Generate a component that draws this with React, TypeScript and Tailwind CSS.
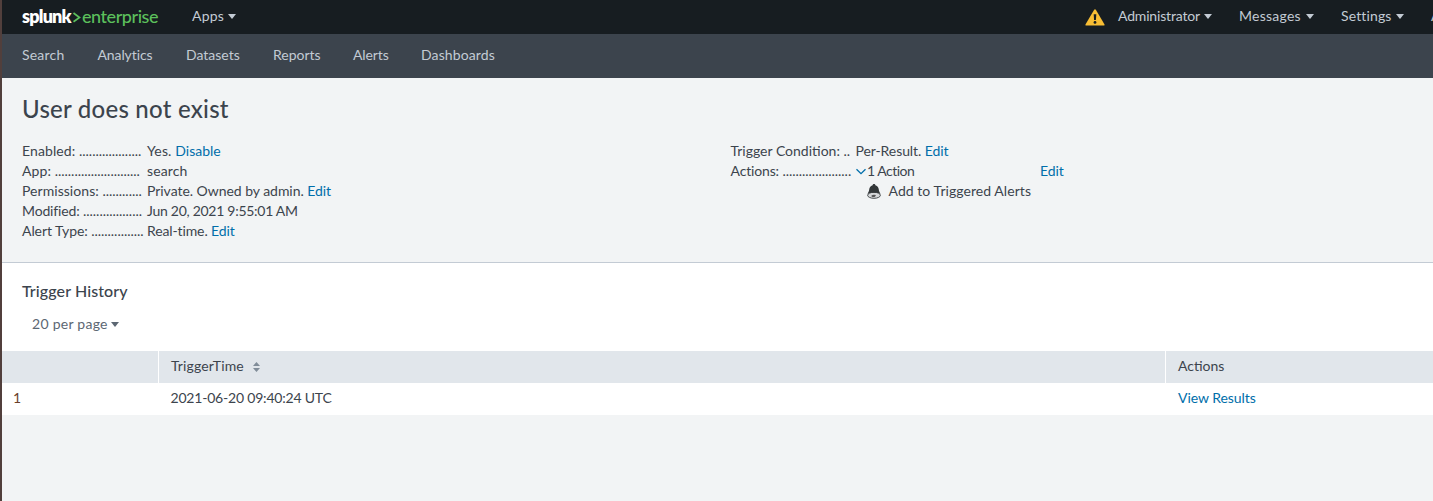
import type { ReactNode } from "react";

const DOTS = "..............................";

function Caret({ className = "" }: { className?: string }) {
  return (
    <svg className={`h-[5px] w-2 shrink-0 ${className}`} viewBox="0 0 8 5" fill="currentColor">
      <path d="M0 0h8L4 5z" />
    </svg>
  );
}

function Row({ label, labelClass, dots, children }: {
  label: string;
  labelClass: string;
  dots: number;
  children: ReactNode;
}) {
  return (
    <div className="flex h-5">
      <dt className="flex w-[125px] shrink-0">
        <span className={labelClass}>{label}</span>
        <span className="tracking-[-0.03px]">{DOTS.slice(0, dots)}</span>
      </dt>
      <dd className="flex">{children}</dd>
    </div>
  );
}

function Edit() {
  return <a className="tracking-[-0.1px] text-[#006eaa]">Edit</a>;
}

export default function App() {
  return (
    <div className="flex h-[501px] w-full flex-col overflow-hidden border-l-2 border-[#513f3c] bg-[#f2f4f5] font-[Lato,sans-serif] text-sm leading-5 whitespace-pre text-[#3c444d]">
      <header className="flex h-[34px] shrink-0 items-center bg-[#171d21] pb-0.5 text-[#c3cbd4]">
        <div className="flex w-[170px] shrink-0 items-center pl-5 text-lg leading-5">
          <span className="w-[50px] font-extrabold tracking-[-0.8px] text-white">splunk</span>
          <svg className="mt-0.5 h-[11px] w-[9px]" viewBox="0 0 9 11" fill="none" stroke="#5cc05c" strokeWidth="1.7">
            <path d="M1.5 1 7.5 5.5 1.5 9.8" />
          </svg>
          <span className="ml-px font-medium tracking-[-0.45px] text-[#5cc05c]">enterprise</span>
        </div>
        <div className="flex items-center pl-5">
          <span className="w-9 tracking-[0.2px]">Apps</span>
          <Caret />
        </div>
        <nav className="ml-auto flex w-[348px] shrink-0 items-center">
          <svg className="mt-0.5 mr-[13px] h-[17px] w-5 shrink-0" viewBox="0 0 20 17">
            <path d="M9 .9Q10-.6 11 .9l8.4 14.4q.5 1.2-.7 1.2H1.3q-1.2 0-.7-1.2z" fill="#f8be34" />
            <path d="M8.7 5.3h2.6l-.4 5.7H9.1z" fill="#171d21" />
            <circle cx="10" cy="13.4" r="1.4" fill="#171d21" />
          </svg>
          <span className="w-[86px] shrink-0 tracking-[-0.17px]">Administrator</span>
          <Caret />
          <span className="ml-[27px] w-[67px] shrink-0 tracking-[0.25px]">Messages</span>
          <Caret />
          <span className="ml-[27px] w-[55px] shrink-0 tracking-[0.13px]">Settings</span>
          <Caret />
          <span className="ml-[27px] shrink-0">Activity</span>
        </nav>
      </header>

      <nav className="flex h-11 shrink-0 items-center bg-[#3c444d] pb-0.5 pl-5 text-[#c3cbd4]">
        <span className="w-[75.5px] tracking-[0.2px]">Search</span>
        <span className="w-[88.5px] tracking-[-0.1px]">Analytics</span>
        <span className="w-[87px]">Datasets</span>
        <span className="w-20">Reports</span>
        <span className="w-[68px] tracking-[-0.1px]">Alerts</span>
        <span className="tracking-[0.12px]">Dashboards</span>
      </nav>

      <section className="h-[185px] shrink-0 border-b border-[#c3cbd4] px-5 pt-[15px]">
        <h1 className="text-2xl leading-8 font-medium tracking-[0.24px]">User does not exist</h1>
        <div className="mt-4 flex">
          <dl className="w-[708.5px]">
            <Row label="Enabled: " labelClass="tracking-[0.1px]" dots={19}>
              <span className="tracking-[0.15px]">Yes. </span>
              <a className="text-[#006eaa]">Disable</a>
            </Row>
            <Row label="App: " labelClass="tracking-[0.1px]" dots={26}>
              <span className="tracking-[0.13px]">search</span>
            </Row>
            <Row label="Permissions: " labelClass="tracking-[0.05px]" dots={12}>
              <span className="tracking-[-0.04px]">Private. Owned by admin. </span>
              <Edit />
            </Row>
            <Row label="Modified: " labelClass="tracking-[-0.15px]" dots={18}>
              <span className="tracking-[-0.28px]">Jun 20, 2021 9:55:01 AM</span>
            </Row>
            <Row label="Alert Type: " labelClass="tracking-[-0.07px]" dots={16}>
              <span className="tracking-[-0.12px]">Real-time. </span>
              <Edit />
            </Row>
          </dl>
          <dl>
            <Row label="Trigger Condition: " labelClass="" dots={2}>
              <span className="tracking-[-0.08px]">Per-Result. </span>
              <Edit />
            </Row>
            <Row label="Actions: " labelClass="tracking-[-0.15px]" dots={21}>
              <div className="flex w-[184.5px] items-center">
                <svg className="mr-[1.5px] h-[7px] w-[10px] shrink-0" viewBox="0 0 10 7" fill="none" stroke="#006eaa" strokeWidth="1.3">
                  <path d="M.5 1.2l4.5 4.5 4.5-4.5" />
                </svg>
                <span className="tracking-[-0.5px]">1 Action</span>
              </div>
              <Edit />
            </Row>
            <div className="flex h-5 items-center pl-[136px]">
              <svg className="mr-[8px] h-[15px] w-[14px] shrink-0" viewBox="0 0 14 15">
                <ellipse cx="7" cy="11.3" rx="6.4" ry="3" fill="#d5d7d9" stroke="#4a4e50" />
                <path d="M7 0c.8 0 1.3.5 1.4 1.2 2.4.7 3.2 2.3 3.4 4.4.1 1.8.9 2.9 1.7 4.300-2-1.500-11-1.500-13 0 .8-1.400 1.600-2.500 1.700-4.300.2-2.100 1-3.700 3.400-4.400C5.700.5 6.200 0 7 0z" fill="#333739" />
                <path d="M4.5 11.4q2-1.3 4.5-.3l-1 1.7q-1.8.7-3.500-.2z" fill="#555" />
              </svg>
              <span className="tracking-[0.06px]">Add to Triggered Alerts</span>
            </div>
          </dl>
        </div>
      </section>

      <section className="h-[88px] shrink-0 bg-white px-5 pt-[18px]">
        <h2 className="text-base leading-5 font-medium tracking-[0.1px]">Trigger History</h2>
        <div className="mt-[13px] flex items-center pl-2.5 text-[#5c6773]">
          <span className="w-[79px] tracking-[0.27px]">20 per page</span>
          <Caret />
        </div>
      </section>

      <div className="grid shrink-0 grid-cols-[157px_1007px_1fr] bg-white">
        <div className="h-8 border-r border-white bg-[#e1e6eb]" />
        <div className="flex h-8 items-center border-r border-white bg-[#e1e6eb] pb-0.5 pl-3">
          <span className="w-[81.5px] tracking-[0.13px]">TriggerTime</span>
          <svg className="mt-px h-[10px] w-[7px]" viewBox="0 0 7 10" fill="#818d99">
            <path d="M0 4h7L3.5 0zM0 6h7l-3.5 4z" />
          </svg>
        </div>
        <div className="flex h-8 items-center bg-[#e1e6eb] pb-0.5 pl-3">Actions</div>
        <div className="flex h-8 items-center pb-0.5 pl-[11px] text-[#6b3f2a]">1</div>
        <div className="flex h-8 items-center pb-0.5 pl-[11.5px] tracking-[-0.2px]">2021-06-20 09:40:24 UTC</div>
        <a className="flex h-8 items-center pb-0.5 pl-3 tracking-[-0.06px] text-[#006eaa]">View Results</a>
      </div>
    </div>
  );
}
